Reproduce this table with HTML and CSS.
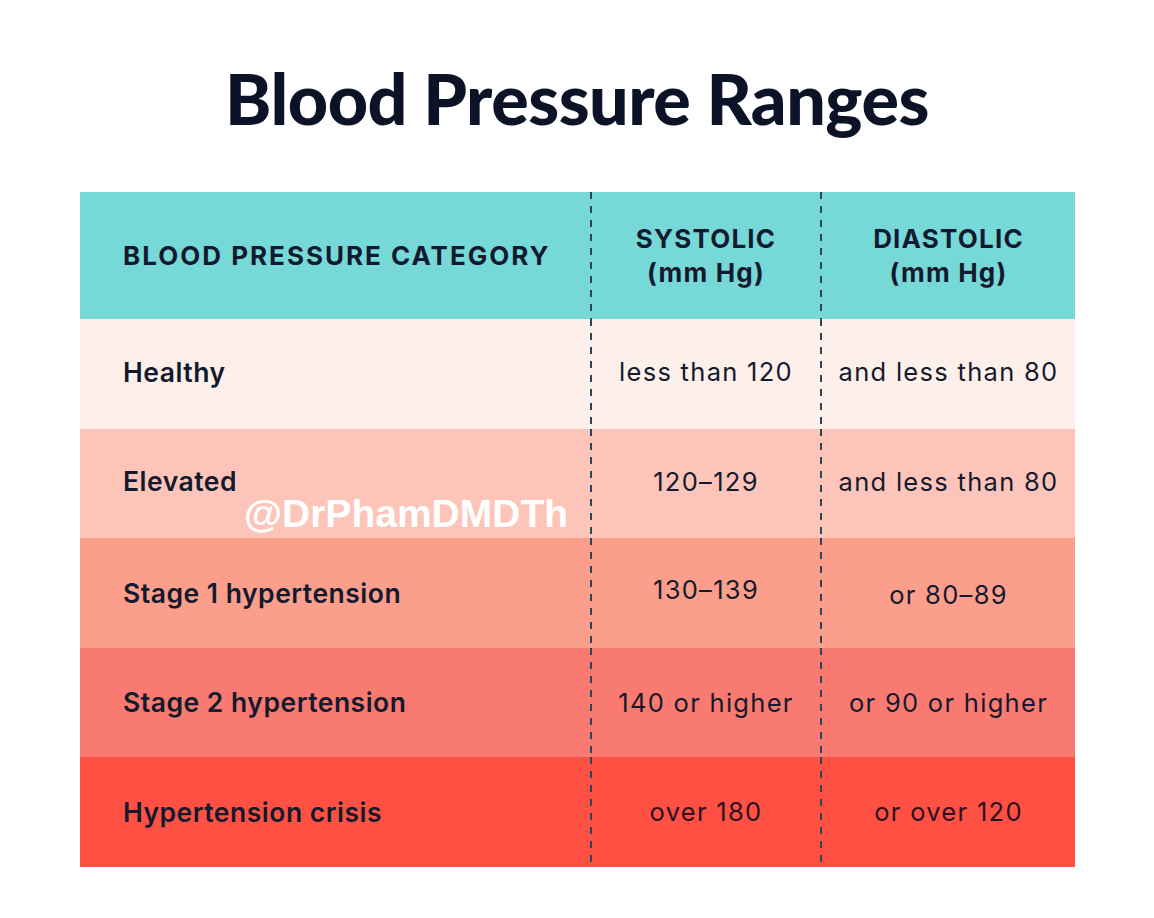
FILE: index.html
```html
<!DOCTYPE html>
<html lang="en">
<head>
    <meta charset="UTF-8">
    <meta name="viewport" content="width=device-width, initial-scale=1.0">
    <title>Blood Pressure Ranges</title>
    <link rel="stylesheet" href="styles.css">
</head>
<body>
    <h1 class="title">Blood Pressure Ranges</h1>

    <div class="chart">
        <div class="row head">
            <div class="cell label">BLOOD PRESSURE CATEGORY</div>
            <div class="cell value">SYSTOLIC<br>(mm Hg)</div>
            <div class="cell value">DIASTOLIC<br>(mm Hg)</div>
        </div>
        <div class="row healthy">
            <div class="cell label">Healthy</div>
            <div class="cell value">less than 120</div>
            <div class="cell value">and less than 80</div>
        </div>
        <div class="row elevated">
            <div class="cell label">Elevated</div>
            <div class="cell value">120–129</div>
            <div class="cell value">and less than 80</div>
            <span class="watermark">@DrPhamDMDTh</span>
        </div>
        <div class="row stage1">
            <div class="cell label">Stage 1 hypertension</div>
            <div class="cell value up">130–139</div>
            <div class="cell value down">or 80–89</div>
        </div>
        <div class="row stage2">
            <div class="cell label">Stage 2 hypertension</div>
            <div class="cell value">140 or higher</div>
            <div class="cell value">or 90 or higher</div>
        </div>
        <div class="row crisis">
            <div class="cell label">Hypertension crisis</div>
            <div class="cell value">over 180</div>
            <div class="cell value">or over 120</div>
        </div>
    </div>
</body>
</html>
```

FILE: styles.css
```css
body {
    margin: 0;
    background-color: #fff;
    font-family: Inter, "Liberation Sans", sans-serif;
    color: #141a2e;
}
.title {
    margin: 0;
    padding-top: 58px;
    height: 134px;
    box-sizing: border-box;
    text-align: center;
    font-family: Lato, "Liberation Sans", sans-serif;
    font-size: 70px;
    font-weight: 900;
    line-height: 80px;
    color: #0d1326;
    letter-spacing: -0.5px;
}
.chart {
    margin: 58px 0 0 80px;
    width: 995px;
}
.row {
    position: relative;
    display: grid;
    grid-template-columns: 510px 230px 255px;
    height: 109.5px;
}
.head {
    height: 127px;
    background-color: #76d9d8;
}
.healthy { background-color: #fdf0ea; }
.elevated { background-color: #fdc5ba; }
.stage1 { background-color: #fb9e8b; }
.stage2 { background-color: #f87a70; }
.crisis { background-color: #fe5143; }

.healthy .cell,
.elevated .cell {
    padding-bottom: 4px;
}

.cell {
    display: flex;
    align-items: center;
    font-size: 25.5px;
    letter-spacing: 1.3px;
}
.label {
    padding-left: 43px;
    font-size: 26.5px;
    font-weight: 600;
    letter-spacing: 0.5px;
}
.head .cell {
    font-size: 26px;
    font-weight: 700;
    line-height: 34px;
    letter-spacing: 1.2px;
}
.head .label {
    letter-spacing: 2px;
}
.value {
    justify-content: center;
    text-align: center;
    padding-left: 2px;
    background-image: repeating-linear-gradient(to bottom, #2a4658 0 7px, transparent 7px 14px);
    background-size: 2px 100%;
    background-repeat: no-repeat;
    background-position: left top;
}
.up {
    padding-bottom: 6px;
}
.down {
    padding-top: 4px;
}
.crisis .cell {
    color: #2b1020;
}
.crisis .label {
    color: #141a2e;
}
.watermark {
    position: absolute;
    left: 164px;
    top: 63px;
    font-family: "Liberation Sans", Arial, sans-serif;
    font-weight: 700;
    font-size: 39px;
    color: #fff;
}
```
